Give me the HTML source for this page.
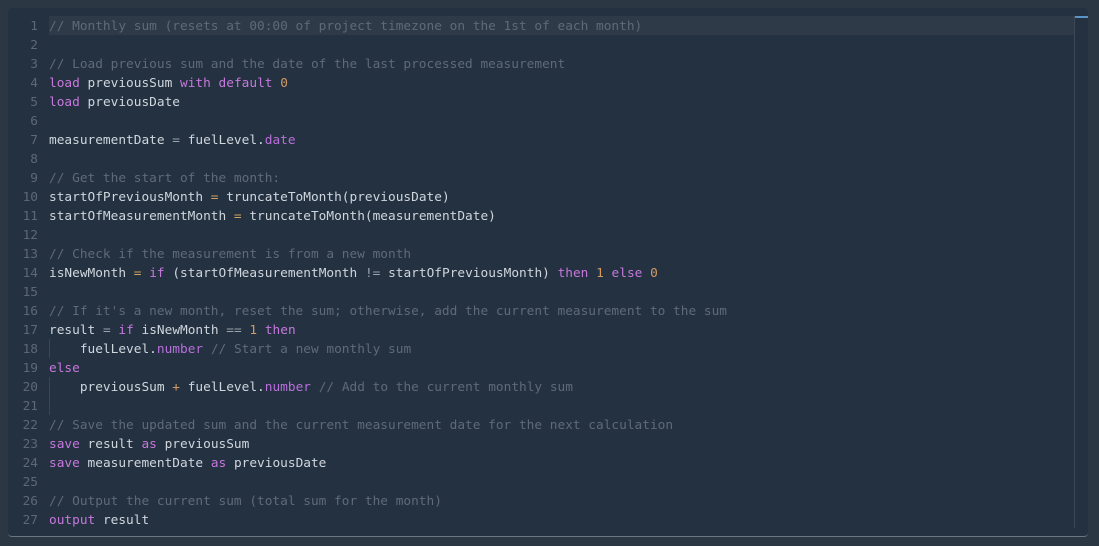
<!DOCTYPE html>
<html><head><meta charset="utf-8"><style>
body{margin:0;width:1099px;height:546px;background:#2c3744;overflow:hidden}
.ed{position:absolute;left:8px;top:8px;width:1080px;height:528px;background:#243140;border-radius:4px;border-bottom:1.5px solid #6b7785}
.hl{position:absolute;left:49px;top:16px;width:1025px;height:19px;background:#2e3a47}
.sb{position:absolute;left:1074px;top:16px;width:1px;height:512px;background:#3d4855}
.sm{position:absolute;left:1075px;top:16px;width:13px;height:2px;background:#5b93c4}
.guide{position:absolute;left:49px;width:1px;background:#3b4652}
.code{position:absolute;left:0;top:17px;font-family:"DejaVu Sans Mono","Liberation Mono",monospace;font-size:12.8px;line-height:19px;color:#cfd6de}
.l{height:19px;white-space:pre}
.n{display:inline-block;width:38px;text-align:right;color:#5d6875;margin-right:11px}
.c{color:#5e6a77}.k{color:#c678dd}.o{color:#d19a66}.p{color:#b86fdb}.g{color:#9aa4ae}.y{color:#d1a35e}
</style></head><body>
<div class="ed"></div>
<div class="hl"></div>
<div class="sb"></div><div class="sm"></div>
<div class="guide" style="top:339px;height:19px"></div>
<div class="guide" style="top:377px;height:38px"></div>
<div class="code">
<div class="l"><span class="n">1</span><span class="c">// Monthly sum (resets at 00:00 of project timezone on the 1st of each month)</span></div>
<div class="l"><span class="n">2</span></div>
<div class="l"><span class="n">3</span><span class="c">// Load previous sum and the date of the last processed measurement</span></div>
<div class="l"><span class="n">4</span><span class="k">load</span> previousSum <span class="k">with</span> <span class="k">default</span> <span class="o">0</span></div>
<div class="l"><span class="n">5</span><span class="k">load</span> previousDate</div>
<div class="l"><span class="n">6</span></div>
<div class="l"><span class="n">7</span>measurementDate <span class="g">=</span> fuelLevel.<span class="p">date</span></div>
<div class="l"><span class="n">8</span></div>
<div class="l"><span class="n">9</span><span class="c">// Get the start of the month:</span></div>
<div class="l"><span class="n">10</span>startOfPreviousMonth <span class="y">=</span> truncateToMonth(previousDate)</div>
<div class="l"><span class="n">11</span>startOfMeasurementMonth <span class="y">=</span> truncateToMonth(measurementDate)</div>
<div class="l"><span class="n">12</span></div>
<div class="l"><span class="n">13</span><span class="c">// Check if the measurement is from a new month</span></div>
<div class="l"><span class="n">14</span>isNewMonth <span class="y">=</span> <span class="k">if</span> (startOfMeasurementMonth <span class="g">!=</span> startOfPreviousMonth) <span class="k">then</span> <span class="o">1</span> <span class="k">else</span> <span class="o">0</span></div>
<div class="l"><span class="n">15</span></div>
<div class="l"><span class="n">16</span><span class="c">// If it's a new month, reset the sum; otherwise, add the current measurement to the sum</span></div>
<div class="l"><span class="n">17</span>result <span class="g">=</span> <span class="k">if</span> isNewMonth <span class="g">==</span> <span class="o">1</span> <span class="k">then</span></div>
<div class="l"><span class="n">18</span>    fuelLevel.<span class="p">number</span> <span class="c">// Start a new monthly sum</span></div>
<div class="l"><span class="n">19</span><span class="k">else</span></div>
<div class="l"><span class="n">20</span>    previousSum <span class="o">+</span> fuelLevel.<span class="p">number</span> <span class="c">// Add to the current monthly sum</span></div>
<div class="l"><span class="n">21</span></div>
<div class="l"><span class="n">22</span><span class="c">// Save the updated sum and the current measurement date for the next calculation</span></div>
<div class="l"><span class="n">23</span><span class="k">save</span> result <span class="k">as</span> previousSum</div>
<div class="l"><span class="n">24</span><span class="k">save</span> measurementDate <span class="k">as</span> previousDate</div>
<div class="l"><span class="n">25</span></div>
<div class="l"><span class="n">26</span><span class="c">// Output the current sum (total sum for the month)</span></div>
<div class="l"><span class="n">27</span><span class="k">output</span> result</div>
</div>
</body></html>
